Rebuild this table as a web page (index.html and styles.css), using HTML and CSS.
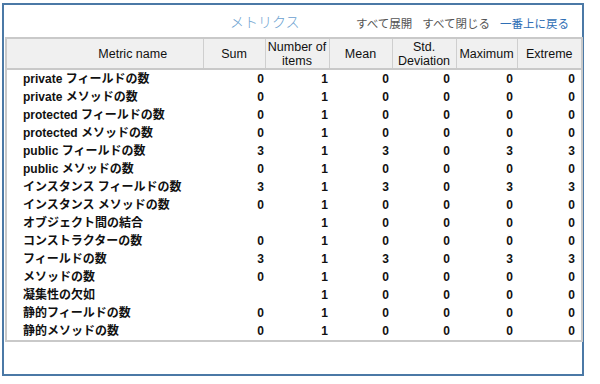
FILE: index.html
```html
<!DOCTYPE html>
<html>
<head>
    <link rel="stylesheet" href="styles.css">
</head>
<body>

<div class="frame">
    <div class="top-bar">
        <span class="title">メトリクス</span>
        <div class="links">
            <span class="link">すべて展開</span>
            <span class="link">すべて閉じる</span>
            <span class="link blue">一番上に戻る</span>
        </div>
    </div>
    <table class="metrics">
        <colgroup>
            <col class="c-name">
            <col class="c-sum">
            <col class="c-num">
            <col class="c-mean">
            <col class="c-std">
            <col class="c-max">
            <col class="c-ext">
        </colgroup>
        <thead>
            <tr>
                <th>Metric name</th>
                <th>Sum</th>
                <th>Number of<br>items</th>
                <th>Mean</th>
                <th>Std.<br>Deviation</th>
                <th>Maximum</th>
                <th>Extreme</th>
            </tr>
        </thead>
        <tbody>
            <tr><td>private フィールドの数</td><td>0</td><td>1</td><td>0</td><td>0</td><td>0</td><td>0</td></tr>
            <tr><td>private メソッドの数</td><td>0</td><td>1</td><td>0</td><td>0</td><td>0</td><td>0</td></tr>
            <tr><td>protected フィールドの数</td><td>0</td><td>1</td><td>0</td><td>0</td><td>0</td><td>0</td></tr>
            <tr><td>protected メソッドの数</td><td>0</td><td>1</td><td>0</td><td>0</td><td>0</td><td>0</td></tr>
            <tr><td>public フィールドの数</td><td>3</td><td>1</td><td>3</td><td>0</td><td>3</td><td>3</td></tr>
            <tr><td>public メソッドの数</td><td>0</td><td>1</td><td>0</td><td>0</td><td>0</td><td>0</td></tr>
            <tr><td>インスタンス フィールドの数</td><td>3</td><td>1</td><td>3</td><td>0</td><td>3</td><td>3</td></tr>
            <tr><td>インスタンス メソッドの数</td><td>0</td><td>1</td><td>0</td><td>0</td><td>0</td><td>0</td></tr>
            <tr><td>オブジェクト間の結合</td><td></td><td>1</td><td>0</td><td>0</td><td>0</td><td>0</td></tr>
            <tr><td>コンストラクターの数</td><td>0</td><td>1</td><td>0</td><td>0</td><td>0</td><td>0</td></tr>
            <tr><td>フィールドの数</td><td>3</td><td>1</td><td>3</td><td>0</td><td>3</td><td>3</td></tr>
            <tr><td>メソッドの数</td><td>0</td><td>1</td><td>0</td><td>0</td><td>0</td><td>0</td></tr>
            <tr><td>凝集性の欠如</td><td></td><td>1</td><td>0</td><td>0</td><td>0</td><td>0</td></tr>
            <tr><td>静的フィールドの数</td><td>0</td><td>1</td><td>0</td><td>0</td><td>0</td><td>0</td></tr>
            <tr><td>静的メソッドの数</td><td>0</td><td>1</td><td>0</td><td>0</td><td>0</td><td>0</td></tr>
        </tbody>
    </table>
</div>

</body>
</html>
```

FILE: styles.css
```css
body, html {
    margin: 0;
    background-color: #ffffff;
    font-family: "Liberation Sans", "Noto Sans CJK JP", sans-serif;
}

.frame {
    margin: 3px 0 0 2px;
    width: 578px;
    height: 369px;
    border: 2px solid #4b79a6;
    box-sizing: content-box;
}

.top-bar {
    display: flex;
    align-items: flex-end;
    justify-content: space-between;
    height: 32px;
    padding: 0 13px 0 226px;
    box-sizing: border-box;
}

.title {
    font-size: 14px;
    font-weight: 300;
    color: #6b9fd0;
    line-height: 20px;
    margin-bottom: 5px;
}

.links {
    display: flex;
    gap: 10px;
    margin-bottom: 5px;
}

.link {
    font-size: 11.5px;
    line-height: 16px;
    color: #555555;
}

.link.blue {
    color: #2f6fb5;
}

.metrics {
    margin-left: 1px;
    width: 576px;
    border-collapse: collapse;
    table-layout: fixed;
    border: 2px solid #c9c9c9;
}

.c-name { width: 197px; }
.c-sum { width: 62px; }
.c-num { width: 64px; }
.c-mean { width: 63px; }
.c-std { width: 64px; }
.c-max { width: 61px; }
.c-ext { width: 65px; }

.metrics th {
    background-color: #f0f0f0;
    border: 1px solid #cfcfcf;
    border-bottom: 2px solid #c9c9c9;
    font-weight: normal;
    font-size: 12.5px;
    line-height: 14px;
    color: #111111;
    height: 29px;
    padding: 0;
    text-align: center;
}

.metrics th:first-child {
    padding-left: 56px;
}

.metrics td {
    font-size: 12px;
    font-weight: bold;
    color: #111111;
    height: 18px;
    padding: 0 1px 0 0;
    text-align: right;
    line-height: 18px;
}

.metrics td:first-child {
    text-align: left;
    padding-left: 16px;
}

.metrics td:nth-child(4) { padding-right: 3px; }
.metrics td:nth-child(5) { padding-right: 6px; }
.metrics td:nth-child(6) { padding-right: 4px; }
.metrics td:nth-child(7) { padding-right: 6px; }
```
